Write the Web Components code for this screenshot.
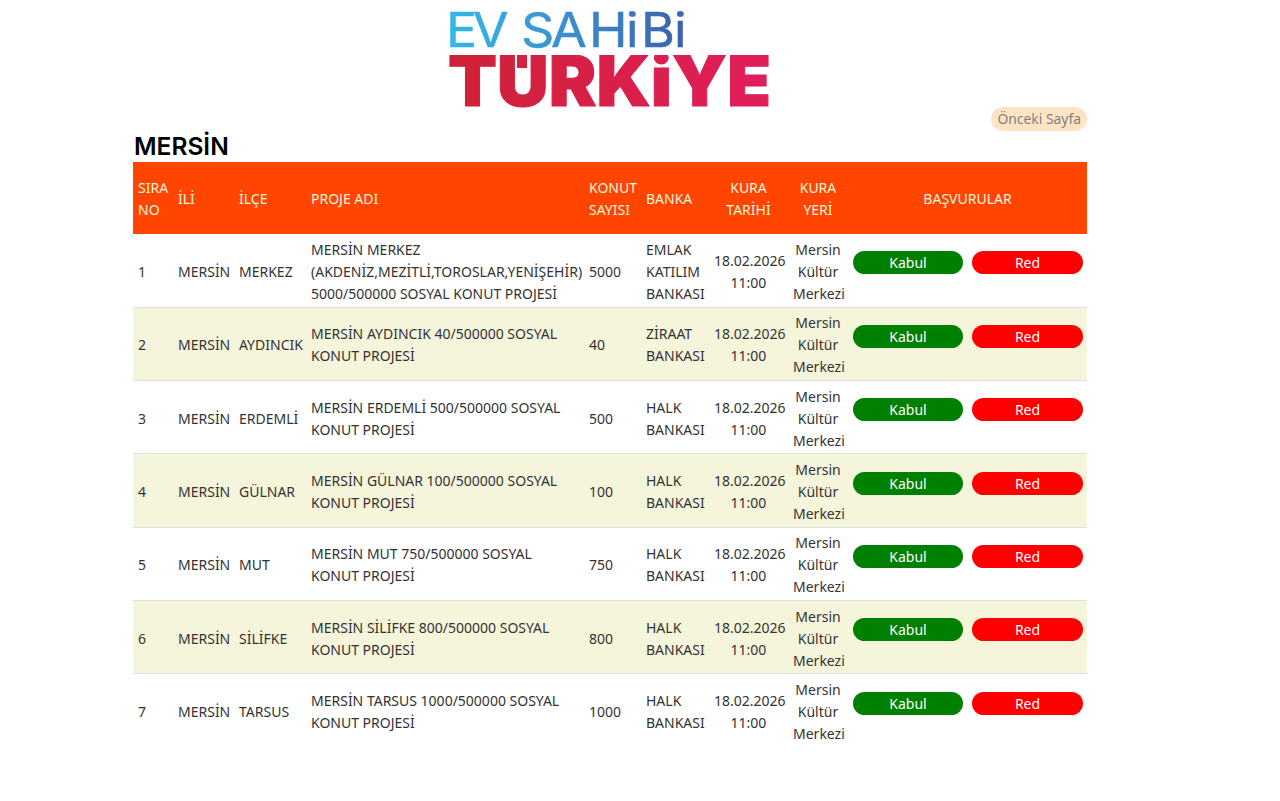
<!DOCTYPE html>
<html lang="tr">
<head>
<meta charset="utf-8">
<title>Ev Sahibi Türkiye - Mersin</title>
<style>
  html, body { margin: 0; padding: 0; background: #fff; }
</style>
</head>
<body>
<ev-page>
  <ev-logo></ev-logo>
  <back-link>Önceki Sayfa</back-link>
  <city-title>MERSİN</city-title>
  <project-table></project-table>
</ev-page>

<script>
class evPage extends HTMLElement {
    constructor(){
        super()
        this.attachShadow({mode: "open"})
        this.shadowRoot.innerHTML = `
            <style>
                :host {
                    display: flex;
                    flex-direction: column;
                    width: 954px;
                    margin-left: 133px;
                    padding-top: 8px;
                    padding-bottom: 52px;
                    font-family: "Noto Sans", "Open Sans", sans-serif;
                    color: #333;
                }
            </style>
            <slot></slot>
        `
    }
}

class evLogo extends HTMLElement {
    constructor(){
        super()
        this.attachShadow({mode: "open"})
        this.shadowRoot.innerHTML = `
            <style>
                :host { display: flex; justify-content: center; height: 99px; }
                svg { display: block; overflow: visible; }
                .top { font: 400 48px "Inter", sans-serif; }
                .bottom { font: 900 70px "Inter", sans-serif; }
            </style>
            <svg width="324" height="99" viewBox="0 0 324 99">
                <defs>
                    <linearGradient id="blue" gradientUnits="userSpaceOnUse" x1="0" x2="218" y1="0" y2="0">
                        <stop offset="0" stop-color="#35b8e8"/>
                        <stop offset="0.5" stop-color="#3a8fd0"/>
                        <stop offset="1" stop-color="#3b62ad"/>
                    </linearGradient>
                    <linearGradient id="red" gradientUnits="userSpaceOnUse" x1="0" x2="323" y1="0" y2="0">
                        <stop offset="0" stop-color="#cf2236"/>
                        <stop offset="1" stop-color="#e21d5b"/>
                    </linearGradient>
                    <clipPath id="altSatir"><rect x="-5" y="47" width="335" height="60"/></clipPath>
                </defs>
                <text class="top" y="39" transform="scale(1.08 1)" x="-1.9 23 60 67.6 95.4 130.6 164.8 178.7 209.3" fill="url(#blue)" stroke="url(#blue)" stroke-width="0.5">EV SAHiBi</text>
                <g clip-path="url(#altSatir)">
                    <text class="bottom" y="98" x="0" textLength="323" lengthAdjust="spacingAndGlyphs" fill="url(#red)" stroke="url(#red)" stroke-width="1">TÜRKiYE</text>
                </g>
                <rect x="69" y="47" width="10" height="13" fill="#d4213c"/>
            </svg>
        `
    }
}

class backLink extends HTMLElement {
    constructor(){
        super()
        this.attachShadow({mode: "open"})
        this.shadowRoot.innerHTML = `
            <style>
                :host { display: flex; justify-content: flex-end; height: 24px; }
                a {
                    display: block;
                    padding: 0 6px;
                    border-radius: 12px;
                    background: #ffe4c4;
                    color: #808080;
                    font-size: 13.9px;
                    line-height: 24px;
                    text-decoration: none;
                }
            </style>
            <a href="#"><slot></slot></a>
        `
    }
}

class cityTitle extends HTMLElement {
    constructor(){
        super()
        this.attachShadow({mode: "open"})
        this.shadowRoot.innerHTML = `
            <style>
                :host {
                    display: block;
                    height: 31px;
                    padding-left: 1px;
                    font: 600 24.5px/31px "Inter", sans-serif;
                    color: #000;
                }
            </style>
            <slot></slot>
        `
    }
}

class pillButton extends HTMLElement {
    constructor(){
        super()
        this.attachShadow({mode: "open"})
        this.shadowRoot.innerHTML = `
            <style>
                :host {
                    display: block;
                    height: 23px;
                    border-radius: 12px;
                    background: #008000;
                    color: #fff;
                    font-size: 14px;
                    line-height: 23px;
                    text-align: center;
                }
                :host([tone="red"]) { background: #ff0000; }
            </style>
            <slot></slot>
        `
    }
}

const projeler = [
    ['1', 'MERKEZ', 'MERSİN MERKEZ<br>(AKDENİZ,MEZİTLİ,TOROSLAR,YENİŞEHİR)<br>5000/500000 SOSYAL KONUT PROJESİ', '5000', 'EMLAK<br>KATILIM<br>BANKASI'],
    ['2', 'AYDINCIK', 'MERSİN AYDINCIK 40/500000 SOSYAL<br>KONUT PROJESİ', '40', 'ZİRAAT<br>BANKASI'],
    ['3', 'ERDEMLİ', 'MERSİN ERDEMLİ 500/500000 SOSYAL<br>KONUT PROJESİ', '500', 'HALK<br>BANKASI'],
    ['4', 'GÜLNAR', 'MERSİN GÜLNAR 100/500000 SOSYAL<br>KONUT PROJESİ', '100', 'HALK<br>BANKASI'],
    ['5', 'MUT', 'MERSİN MUT 750/500000 SOSYAL<br>KONUT PROJESİ', '750', 'HALK<br>BANKASI'],
    ['6', 'SİLİFKE', 'MERSİN SİLİFKE 800/500000 SOSYAL<br>KONUT PROJESİ', '800', 'HALK<br>BANKASI'],
    ['7', 'TARSUS', 'MERSİN TARSUS 1000/500000 SOSYAL<br>KONUT PROJESİ', '1000', 'HALK<br>BANKASI']
]

class projectTable extends HTMLElement {
    constructor(){
        super()
        this.attachShadow({mode: "open"})
    }

    getRows(){
        return projeler.map(p => `
            <tr>
                <td>${p[0]}</td>
                <td>MERSİN</td>
                <td>${p[1]}</td>
                <td class="nowrap">${p[2]}</td>
                <td>${p[3]}</td>
                <td>${p[4]}</td>
                <td class="center">18.02.2026<br>11:00</td>
                <td class="center">Mersin<br>Kültür<br>Merkezi</td>
                <td class="last"><div class="actions"><pill-button>Kabul</pill-button><pill-button tone="red">Red</pill-button></div></td>
            </tr>
        `).join('')
    }

    connectedCallback(){
        this.shadowRoot.innerHTML = `
            <style>
                :host { display: block; font-size: 14px; line-height: 22px; }
                table { width: 954px; table-layout: fixed; border-collapse: collapse; }
                thead tr { background: #ff4500; color: #f5f5dc; }
                th { height: 72px; box-sizing: border-box; padding: 2px 5px 0; font-weight: 400; text-align: left; }
                td { height: 73.33px; box-sizing: border-box; padding: 3px 5px 0; border-bottom: 1px solid #dee2e6; }
                td.last { padding-right: 4px; }
                tbody tr:nth-child(even) { background: #f5f5dc; }
                tbody tr:last-child td { border-bottom: 0; }
                .center, th.center { text-align: center; }
                .nowrap { white-space: nowrap; }
                .actions { display: grid; grid-template-columns: 110px 111px; gap: 9px; margin-bottom: 18px; }
            </style>
            <table>
                <colgroup>
                    <col style="width:40px"><col style="width:61px"><col style="width:72px"><col style="width:278px">
                    <col style="width:57px"><col style="width:68px"><col style="width:79px"><col style="width:60px"><col style="width:239px">
                </colgroup>
                <thead>
                    <tr>
                        <th>SIRA NO</th><th>İLİ</th><th>İLÇE</th><th>PROJE ADI</th><th>KONUT SAYISI</th><th>BANKA</th>
                        <th class="center">KURA TARİHİ</th><th class="center">KURA YERİ</th><th class="center">BAŞVURULAR</th>
                    </tr>
                </thead>
                <tbody>${this.getRows()}</tbody>
            </table>
        `
    }
}

customElements.define("pill-button", pillButton)
customElements.define("ev-page", evPage)
customElements.define("ev-logo", evLogo)
customElements.define("back-link", backLink)
customElements.define("city-title", cityTitle)
customElements.define("project-table", projectTable)
</script>
</body>
</html>
